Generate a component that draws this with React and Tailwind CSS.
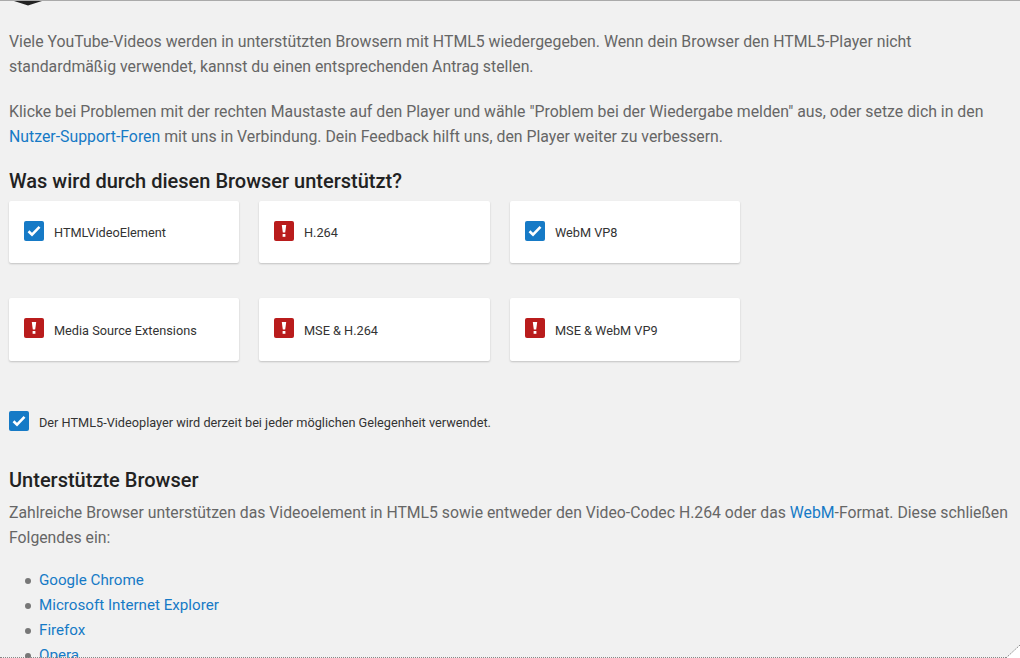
import React from 'react';

const Check = ({ size = 20 }) => (
  <span className="flex shrink-0 items-center justify-center rounded-[2px] bg-[#167ac6]" style={{ width: size, height: size }}>
    <svg width="14" height="12" viewBox="0 0 14 12" fill="none">
      <path d="M1.5 6.2 5 9.6 12.5 1.8" stroke="white" strokeWidth="2.6" />
    </svg>
  </span>
);

const Warn = () => (
  <span className="flex h-5 w-5 shrink-0 items-center justify-center rounded-[2px] bg-[#b91c1c]">
    <svg width="6" height="14" viewBox="0 0 6 14">
      <path d="M0.8 1h4.4L4.2 8.5H1.8z" fill="white" />
      <rect x="1.6" y="10" width="2.8" height="2.8" fill="white" />
    </svg>
  </span>
);

const Card = ({ ok, label, className, labelClass }) => (
  <div className={`flex items-start rounded-[2px] bg-white pl-[15px] pt-5 shadow-[0_1px_2px_rgba(0,0,0,0.2)] ${className}`}>
    {ok ? <Check /> : <Warn />}
    <span className={`ml-[10px] text-[12.73px] leading-5 text-[#333] ${labelClass}`}>{label}</span>
  </div>
);

const A = ({ children }) => <a className="text-[#167ac6]">{children}</a>;

const browsers = ['Google Chrome', 'Microsoft Internet Explorer', 'Firefox', 'Opera'];

export default function App() {
  return (
    <div className="relative h-[658px] w-[1020px] overflow-hidden border-t border-[#aaaaaa] bg-[#f1f1f1] pl-[9px] pt-[28px] font-['Roboto',sans-serif] text-[15.78px] leading-[25px] text-[#666]">
      <svg className="absolute left-[14px] top-0" width="28" height="5" viewBox="0 0 28 5">
        <path d="M0 0h28L17 3.5 14 4.5 11 3.5z" fill="#222" />
      </svg>

      <p className="text-[15.83px]">
        Viele YouTube-Videos werden in unterstützten Browsern mit HTML5 wiedergegeben. Wenn dein Browser den HTML5-Player nicht
        <br />
        standardmäßig verwendet, kannst du einen entsprechenden Antrag stellen.
      </p>
      <p className="mt-5 text-[15.83px]">
        Klicke bei Problemen mit der rechten Maustaste auf den Player und wähle "Problem bei der Wiedergabe melden" aus, oder setze dich in den
        <br />
        <A>Nutzer-Support-Foren</A> mit uns in Verbindung. Dein Feedback hilft uns, den Player weiter zu verbessern.
      </p>

      <h2 className="mt-5 text-xl font-medium leading-[25px] text-[#222]">Was wird durch diesen Browser unterstützt?</h2>

      <div className="mt-[7px] grid w-[731px] grid-cols-[230px_231px_230px] gap-x-5 gap-y-[35px]">
        <Card ok label="HTMLVideoElement" className="h-[62px]" labelClass="mt-[2px]" />
        <Card label="H.264" className="h-[62px]" labelClass="mt-[2px]" />
        <Card ok label="WebM VP8" className="h-[62px]" labelClass="mt-[2px]" />
        <Card label="Media Source Extensions" className="h-[63px]" labelClass="mt-[3px]" />
        <Card label="MSE & H.264" className="h-[63px]" labelClass="mt-[3px]" />
        <Card label="MSE & WebM VP9" className="h-[63px]" labelClass="mt-[3px]" />
      </div>

      <div className="mt-[50px] flex items-start">
        <Check />
        <span className="ml-[10px] mt-[2px] text-[12.73px] leading-5 text-[#333]">Der HTML5-Videoplayer wird derzeit bei jeder möglichen Gelegenheit verwendet.</span>
      </div>

      <h2 className="mt-[35px] text-xl font-medium leading-[25px] text-[#222]">Unterstützte Browser</h2>
      <p className="mt-[7px]">
        Zahlreiche Browser unterstützen das Videoelement in HTML5 sowie entweder den Video-Codec H.264 oder das <A>WebM</A>-Format. Diese schließen
        <br />
        Folgendes ein:
      </p>
      <ul className="mt-[18px] pl-4 text-[15.17px]">
        {browsers.map((b) => (
          <li key={b} className="flex items-center gap-2">
            <span className="h-1.5 w-1.5 rounded-full bg-[#777]" />
            <A>{b}</A>
          </li>
        ))}
      </ul>

      {/* dotted edge + folded corner */}
      <div className="absolute inset-x-0 bottom-0 h-px border-b border-dotted border-[#888]" />
      <svg className="absolute bottom-0 right-0" width="14" height="13" viewBox="0 0 14 13">
        <path d="M14 0V13H0z" fill="white" />
        <path d="M14 0 0 13" stroke="#888" strokeDasharray="1.5 1" fill="none" />
      </svg>
    </div>
  );
}
